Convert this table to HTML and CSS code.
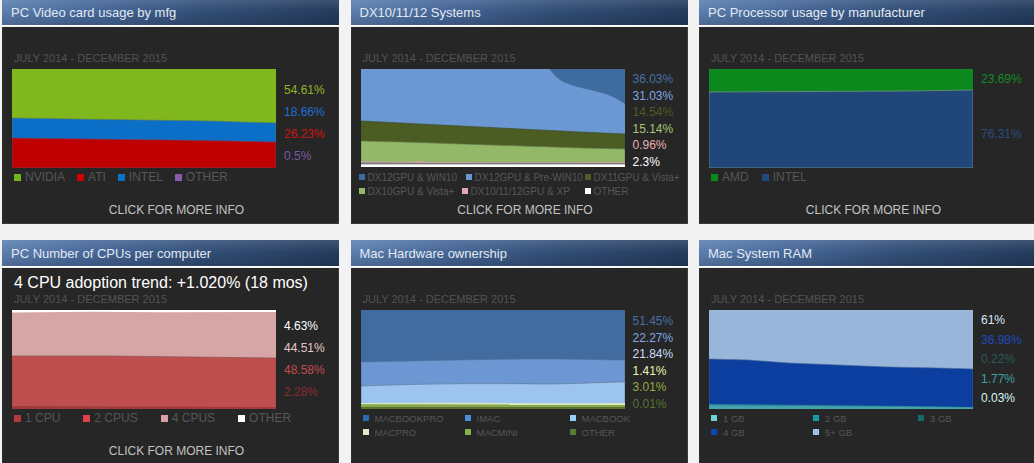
FILE: index.html
```html
<!DOCTYPE html>
<html>
<head>
<meta charset="utf-8">
<title>Steam Hardware Survey</title>
<link rel="stylesheet" href="styles.css">
</head>
<body>
<div class="dash">

  <!-- Panel 1 -->
  <section class="panel">
    <div class="head">PC Video card usage by mfg</div>
    <div class="body">
      <div class="trend"></div>
      <div class="range">JULY 2014 - DECEMBER 2015</div>
      <div class="chart-row">
        <svg class="chart" width="264" height="99" viewBox="0 0 264 99">
          <rect width="264" height="99" fill="#80b71c"/>
          <path d="M0 49 L60 50 L130 51 L200 52 L264 54 L264 99 L0 99Z" fill="#0b6fc8" stroke="#5a7a5a" stroke-width="0.6"/>
          <path d="M0 69 L80 70 L160 71 L220 72 L264 73 L264 99 L0 99Z" fill="#bf0000" stroke="#6a4a6a" stroke-width="0.6"/>
        </svg>
        <div class="values v22 vpad10">
          <div class="c-nv">54.61%</div>
          <div class="c-ati">18.66%</div>
          <div class="c-intel">26.23%</div>
          <div class="c-other">0.5%</div>
        </div>
      </div>
      <div class="legend">
        <div class="lrow gap12">
          <span class="item"><i class="sq sq7 s-nv"></i>NVIDIA</span>
          <span class="item"><i class="sq sq7 s-ati"></i>ATI</span>
          <span class="item"><i class="sq sq7 s-intel"></i>INTEL</span>
          <span class="item"><i class="sq sq7 s-other"></i>OTHER</span>
        </div>
      </div>
      <div class="more">CLICK FOR MORE INFO</div>
    </div>
  </section>

  <!-- Panel 2 -->
  <section class="panel">
    <div class="head">DX10/11/12 Systems</div>
    <div class="body">
      <div class="trend"></div>
      <div class="range">JULY 2014 - DECEMBER 2015</div>
      <div class="chart-row">
        <svg class="chart" width="264" height="99" viewBox="0 0 264 99">
          <rect width="264" height="99" fill="#6b97d3"/>
          <path d="M188 0 C195 8 199 12 205 14 C220 20 232 21 245 25 C253 28 258 31 264 35 L264 0Z" fill="#3f6c9f"/>
          <path d="M0 52 L40 54 L100 57 L160 60 L220 63 L264 65 L264 99 L0 99Z" fill="#4b5d22" stroke="#3a4a2a" stroke-width="0.6"/>
          <path d="M0 72 L40 73 L100 75 L160 77 L220 79 L264 80 L264 99 L0 99Z" fill="#92b868" stroke="#6a7a50" stroke-width="0.6"/>
          <path d="M0 92 L40 93 L60 92 L70 93 L140 93 L200 93 L264 93 L264 99 L0 99Z" fill="#c9a3a3"/>
          <path d="M0 93.5 L80 94 L160 93.8 L264 94 L264 99 L0 99Z" fill="#7b7b7b"/>
          <rect x="0" y="95.4" width="264" height="2.6" fill="#ffffff"/>
          <rect x="0" y="98" width="264" height="1" fill="#262626"/>
        </svg>
        <div class="values v165 vpad2">
          <div class="c-dx12w10">36.03%</div>
          <div class="c-dx12pre">31.03%</div>
          <div class="c-dx11">14.54%</div>
          <div class="c-dx10">15.14%</div>
          <div class="c-xp">0.96%</div>
          <div class="c-white">2.3%</div>
        </div>
      </div>
      <div class="legend small10">
        <div class="lrow">
          <span class="item dx-a"><i class="sq sq6 s-dx12w10"></i>DX12GPU &amp; WIN10</span>
          <span class="item dx-b"><i class="sq sq6 s-dx12pre"></i>DX12GPU &amp; Pre-WIN10</span>
          <span class="item"><i class="sq sq6 s-dx11"></i>DX11GPU &amp; Vista+</span>
        </div>
        <div class="lrow">
          <span class="item dx-c"><i class="sq sq6 s-dx10"></i>DX10GPU &amp; Vista+</span>
          <span class="item dx-d"><i class="sq sq6 s-xp"></i>DX10/11/12GPU &amp; XP</span>
          <span class="item"><i class="sq sq6 s-white"></i>OTHER</span>
        </div>
      </div>
      <div class="more">CLICK FOR MORE INFO</div>
    </div>
  </section>

  <!-- Panel 3 -->
  <section class="panel">
    <div class="head">PC Processor usage by manufacturer</div>
    <div class="body">
      <div class="trend"></div>
      <div class="range">JULY 2014 - DECEMBER 2015</div>
      <div class="chart-row">
        <svg class="chart" width="264" height="99" viewBox="0 0 264 99">
          <rect width="264" height="99" fill="#0b891c"/>
          <path d="M0 23 L100 22.5 L200 22 L264 21 L264 99 L0 99Z" fill="#21477a" stroke="#7f9a8a" stroke-width="0.7"/>
        </svg>
        <div class="values vcpu">
          <div class="c-amd">23.69%</div>
          <div class="c-intelcpu second">76.31%</div>
        </div>
      </div>
      <div class="legend">
        <div class="lrow gap13">
          <span class="item"><i class="sq sq7 s-amd"></i>AMD</span>
          <span class="item"><i class="sq sq7 s-intelcpu"></i>INTEL</span>
        </div>
      </div>
      <div class="more">CLICK FOR MORE INFO</div>
    </div>
  </section>

  <!-- Panel 4 -->
  <section class="panel">
    <div class="head">PC Number of CPUs per computer</div>
    <div class="body">
      <div class="trend">4 CPU adoption trend: +1.020% (18 mos)</div>
      <div class="range">JULY 2014 - DECEMBER 2015</div>
      <div class="chart-row">
        <svg class="chart" width="264" height="99" viewBox="0 0 264 99">
          <rect width="264" height="99" fill="#d6a5a5"/>
          <path d="M0 0 L264 0 L264 2 L150 2.3 L80 1.8 L0 2.4Z" fill="#ffffff"/>
          <path d="M0 46 L100 46 L180 47 L264 48 L264 99 L0 99Z" fill="#bf4f4e" stroke="#7a5050" stroke-width="0.6"/>
          <path d="M0 96 L130 96.5 L264 97 L264 99 L0 99Z" fill="#a03a3a"/>
        </svg>
        <div class="values v22 vpad5">
          <div class="c-white">4.63%</div>
          <div class="c-4cpu">44.51%</div>
          <div class="c-2cpu">48.58%</div>
          <div class="c-1cpu">2.28%</div>
        </div>
      </div>
      <div class="legend">
        <div class="lrow gap23">
          <span class="item"><i class="sq sq7 s-1cpu"></i>1 CPU</span>
          <span class="item"><i class="sq sq7 s-2cpu"></i>2 CPUS</span>
          <span class="item"><i class="sq sq7 s-4cpu"></i>4 CPUS</span>
          <span class="item"><i class="sq sq7 s-white"></i>OTHER</span>
        </div>
      </div>
      <div class="more">CLICK FOR MORE INFO</div>
    </div>
  </section>

  <!-- Panel 5 -->
  <section class="panel">
    <div class="head">Mac Hardware ownership</div>
    <div class="body">
      <div class="trend"></div>
      <div class="range">JULY 2014 - DECEMBER 2015</div>
      <div class="chart-row">
        <svg class="chart" width="264" height="99" viewBox="0 0 264 99">
          <rect width="264" height="99" fill="#426c9f"/>
          <path d="M0 52 C60 51 120 49 180 49 C220 49 240 50 264 50 L264 99 L0 99Z" fill="#6c97d2" stroke="#56709a" stroke-width="0.6"/>
          <path d="M0 76 C50 74 120 73 180 74 C220 74 240 72 264 72 L264 99 L0 99Z" fill="#9dc4ef" stroke="#5b7290" stroke-width="0.6"/>
          <path d="M0 93 L100 92.8 L200 93.2 L264 93 L264 99 L0 99Z" fill="#d7e8c2"/>
          <path d="M0 94.3 L264 94.5 L264 99 L0 99Z" fill="#86a84a"/>
          <rect x="0" y="97" width="264" height="2" fill="#5b7131"/>
        </svg>
        <div class="values v165 vpad3">
          <div class="c-mbp">51.45%</div>
          <div class="c-imac">22.27%</div>
          <div class="c-mb">21.84%</div>
          <div class="c-mpro">1.41%</div>
          <div class="c-mmini">3.01%</div>
          <div class="c-mother">0.01%</div>
        </div>
      </div>
      <div class="legend small9">
        <div class="lgrid">
          <span class="item"><i class="sq sq6 s-mbp"></i>MACBOOKPRO</span>
          <span class="item"><i class="sq sq6 s-imac"></i>IMAC</span>
          <span class="item"><i class="sq sq6 s-mb"></i>MACBOOK</span>
          <span class="item"><i class="sq sq6 s-mpro"></i>MACPRO</span>
          <span class="item"><i class="sq sq6 s-mmini"></i>MACMINI</span>
          <span class="item"><i class="sq sq6 s-mother"></i>OTHER</span>
        </div>
      </div>
    </div>
  </section>

  <!-- Panel 6 -->
  <section class="panel">
    <div class="head">Mac System RAM</div>
    <div class="body">
      <div class="trend"></div>
      <div class="range">JULY 2014 - DECEMBER 2015</div>
      <div class="chart-row">
        <svg class="chart" width="264" height="99" viewBox="0 0 264 99">
          <rect width="264" height="99" fill="#98b5da"/>
          <path d="M0 49 L40 50 L80 53 L130 55 L180 57 L230 58 L264 59 L264 99 L0 99Z" fill="#0b3e9f" stroke="#4a6a9a" stroke-width="0.6"/>
          <path d="M0 94 L100 95 L200 96 L264 97 L264 99 L0 99Z" fill="#2a8a9a"/>
          <path d="M0 95.5 L264 97.5 L264 99 L0 99Z" fill="#47a3ad"/>
        </svg>
        <div class="values v195 vpad0">
          <div class="c-5gb">61%</div>
          <div class="c-4gb">36.98%</div>
          <div class="c-3gb">0.22%</div>
          <div class="c-2gb">1.77%</div>
          <div class="c-1gb">0.03%</div>
        </div>
      </div>
      <div class="legend small9">
        <div class="lgrid">
          <span class="item"><i class="sq sq6 s-1gb"></i>1 GB</span>
          <span class="item"><i class="sq sq6 s-2gb"></i>2 GB</span>
          <span class="item"><i class="sq sq6 s-3gb"></i>3 GB</span>
          <span class="item"><i class="sq sq6 s-4gb"></i>4 GB</span>
          <span class="item"><i class="sq sq6 s-5gb"></i>5+ GB</span>
        </div>
      </div>
    </div>
  </section>

</div>
</body>
</html>
```

FILE: styles.css
```css
html, body {
  margin: 0;
  padding: 0;
  background: #f2f2f2;
  font-family: "Liberation Sans", Arial, sans-serif;
  overflow: hidden;
}

.dash {
  display: grid;
  grid-template-columns: repeat(3, 337px);
  column-gap: 11.5px;
  row-gap: 16px;
  padding-left: 2px;
  margin-top: -1px;
}

.panel {
  display: flex;
  flex-direction: column;
}

.head {
  height: 25px;
  padding-top: 1px;
  line-height: 26px;
  padding-left: 9px;
  font-size: 13px;
  color: #e2e9f2;
  border-bottom: 1px solid #ffffff;
  background:
    linear-gradient(to bottom, rgba(255,255,255,0.12) 0%, rgba(255,255,255,0) 45%, rgba(0,0,0,0.16) 100%),
    linear-gradient(to right, #5b7fae 0%, #48699b 25%, #324f78 60%, #253c5e 100%);
}

.body {
  margin-top: 1px;
  height: 197px;
  box-sizing: border-box;
  padding-top: 5px;
  background: #262626;
  border-left: 1px solid #2e2e2e;
  border-right: 1px solid #3a3a3a;
  border-bottom: 1px solid #3a3a3a;
}

.trend {
  height: 20px;
  line-height: 20px;
  font-size: 16px;
  color: #ffffff;
  padding-left: 11px;
}

.range {
  height: 13px;
  line-height: 13px;
  font-size: 11px;
  color: #535353;
  padding-left: 11px;
}

.chart-row {
  display: flex;
  height: 99px;
  margin-top: 4px;
  padding-left: 9px;
}

.chart {
  display: block;
  flex: none;
}

.values {
  margin-left: 8px;
  font-size: 12px;
  white-space: nowrap;
}

.v22 { line-height: 22px; }
.v165 { line-height: 16.5px; }
.v195 { line-height: 19.5px; }
.vpad10 { padding-top: 10px; }
.vpad5 { padding-top: 5px; }
.vpad3 { padding-top: 3px; }
.vpad2 { padding-top: 2px; }
.vpad0 { padding-top: 1px; }
.vcpu { line-height: 14px; padding-top: 3px; }
.vcpu .second { margin-top: 41px; }

.legend {
  height: 28px;
  margin-top: 2px;
  padding-left: 11px;
  font-size: 12px;
  color: #575757;
}

.lrow {
  display: flex;
  align-items: center;
  height: 14px;
  white-space: nowrap;
}

.gap12 { gap: 12px; }
.gap13 { gap: 13px; }
.gap23 { gap: 23px; }

.item {
  display: inline-flex;
  align-items: center;
  white-space: nowrap;
}

.sq {
  display: inline-block;
  flex: none;
}

.sq7 { width: 7px; height: 7px; margin-right: 4px; }
.sq6 { width: 6px; height: 6px; margin-right: 3px; }

.small10 {
  font-size: 10px;
  padding-left: 7px;
}

.small9 {
  font-size: 9.5px;
  padding-left: 11px;
}

.small9 .sq6 { margin-right: 6px; }

.lgrid {
  display: grid;
  grid-template-columns: 102px 105px auto;
  grid-auto-rows: 14px;
  align-items: center;
}

.dx-a { width: 107px; }
.dx-b { width: 119px; }
.dx-c { width: 103px; }
.dx-d { width: 123px; }

.more {
  margin-top: 5px;
  height: 14px;
  line-height: 14px;
  font-size: 12px;
  color: #c2c2c2;
  text-align: center;
  padding-left: 12px;
}

/* value colours */
.c-nv { color: #8db52a; }
.c-ati { color: #1d6fd0; }
.c-intel { color: #cc1414; }
.c-other { color: #7559a8; }
.c-white { color: #ffffff; }
.c-dx12w10 { color: #4670a6; }
.c-dx12pre { color: #7fa5e2; }
.c-dx11 { color: #4c5c22; }
.c-dx10 { color: #a6c673; }
.c-xp { color: #e9b2b4; }
.c-amd { color: #128c22; }
.c-intelcpu { color: #284c82; }
.c-4cpu { color: #e6c6c6; }
.c-2cpu { color: #c84a4a; }
.c-1cpu { color: #8a2c32; }
.c-mbp { color: #4a6ea2; }
.c-imac { color: #80a6e2; }
.c-mb { color: #cadef8; }
.c-mpro { color: #eaf2b4; }
.c-mmini { color: #93ab42; }
.c-mother { color: #5b7232; }
.c-5gb { color: #dae7f8; }
.c-4gb { color: #1d4bbf; }
.c-3gb { color: #2b5a5a; }
.c-2gb { color: #42a2a2; }
.c-1gb { color: #daf5f5; }

/* legend squares */
.s-nv { background: #6fb81a; }
.s-ati { background: #d00000; }
.s-intel { background: #0b72c8; }
.s-other { background: #8a5aa8; }
.s-white { background: #ffffff; }
.s-dx12w10 { background: #3f6c9f; }
.s-dx12pre { background: #6b97d3; }
.s-dx11 { background: #4b5d22; }
.s-dx10 { background: #92b868; }
.s-xp { background: #e0a8b0; }
.s-amd { background: #0b8a1c; }
.s-intelcpu { background: #1e4a7e; }
.s-1cpu { background: #b03a3a; }
.s-2cpu { background: #e0404a; }
.s-4cpu { background: #d8a0a8; }
.s-mbp { background: #2a6aa8; }
.s-imac { background: #4a90d8; }
.s-mb { background: #98cdf5; }
.s-mpro { background: #dbecc4; }
.s-mmini { background: #84b048; }
.s-mother { background: #5a7832; }
.s-1gb { background: #6fd0d8; }
.s-2gb { background: #1a9aa8; }
.s-3gb { background: #176a6a; }
.s-4gb { background: #0b48b8; }
.s-5gb { background: #a0c0e8; }
```
